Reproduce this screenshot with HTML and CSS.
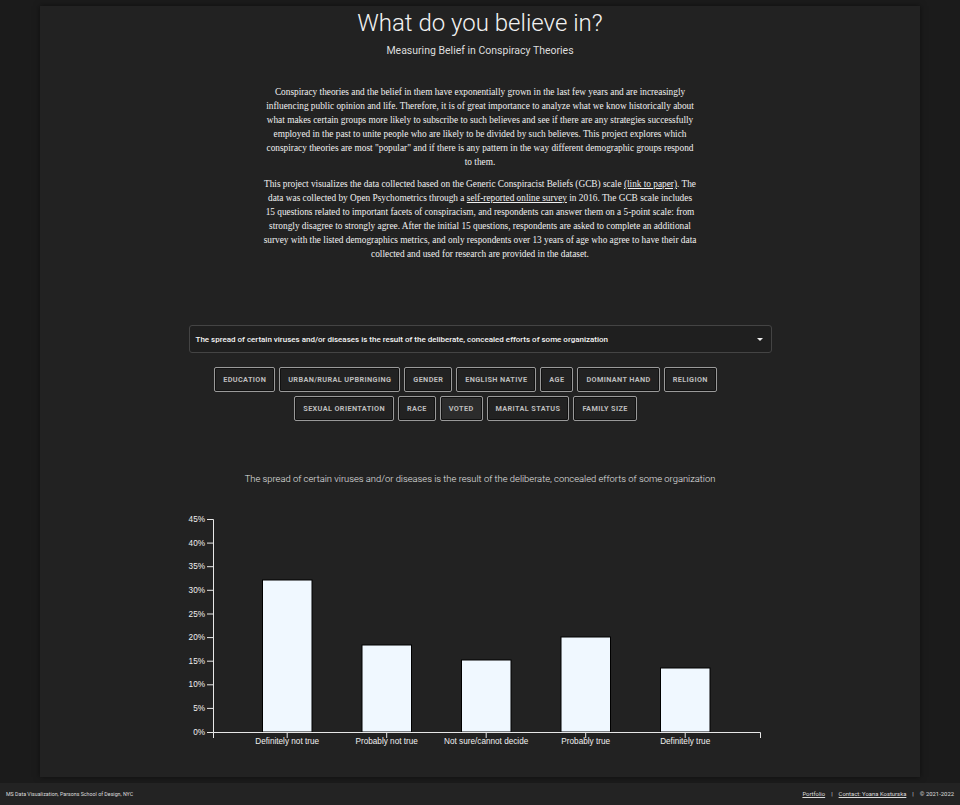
FILE: index.html
```html
<!DOCTYPE html>
<html lang="en">
<head>
<meta charset="utf-8">
<title>What do you believe in?</title>
<link rel="stylesheet" href="styles.css">
</head>
<body>
<main class="page">
  <header class="hero">
    <h1 class="title">What do you believe in?</h1>
    <p class="subtitle">Measuring Belief in Conspiracy Theories</p>
  </header>
  <section class="intro">
    <p>Conspiracy theories and the belief in them have exponentially grown in the last few years and are increasingly influencing public opinion and life. Therefore, it is of great importance to analyze what we know historically about what makes certain groups more likely to subscribe to such believes and see if there are any strategies successfully employed in the past to unite people who are likely to be divided by such believes. This project explores which conspiracy theories are most "popular" and if there is any pattern in the way different demographic groups respond to them.</p>
    <p>This project visualizes the data collected based on the Generic Conspiracist Beliefs (GCB) scale <a href="#">(link to paper)</a>. The data was collected by Open Psychometrics through a <a href="#">self-reported online survey</a> in 2016. The GCB scale includes 15&nbsp;questions related to important facets of conspiracism, and respondents can answer them on a 5-point scale: from strongly disagree to strongly agree. After the initial 15 questions, respondents are asked to complete an additional survey with the listed demographics metrics, and only respondents over 13 years of age who agree to have their data collected and used for research are provided in the dataset.</p>
  </section>
  <div class="select">
    <span class="select-text">The spread of certain viruses and/or diseases is the result of the deliberate, concealed efforts of some organization</span>
    <span class="caret"></span>
  </div>
  <div class="filters">
    <div class="row">
      <button class="btn">Education</button>
      <button class="btn">Urban/Rural Upbringing</button>
      <button class="btn">Gender</button>
      <button class="btn">English Native</button>
      <button class="btn">Age</button>
      <button class="btn">Dominant Hand</button>
      <button class="btn">Religion</button>
    </div>
    <div class="row">
      <button class="btn">Sexual Orientation</button>
      <button class="btn">Race</button>
      <button class="btn active">Voted</button>
      <button class="btn">Marital Status</button>
      <button class="btn">Family Size</button>
    </div>
  </div>
  <h2 class="chart-title">The spread of certain viruses and/or diseases is the result of the deliberate, concealed efforts of some organization</h2>
  <svg class="chart" width="600" height="250" viewBox="0 0 600 250">
    <g class="bars">
      <rect x="82.5" y="75" width="49.5" height="152"/>
      <rect x="182" y="140" width="49.5" height="87"/>
      <rect x="281.5" y="155" width="49.5" height="72"/>
      <rect x="381" y="132" width="49.5" height="95"/>
      <rect x="480.5" y="163" width="49.5" height="64"/>
    </g>
    <g class="axis">
      <path d="M27 14.5H33.5V227.5H27"/>
      <path d="M27 38.1H33M27 61.7H33M27 85.3H33M27 109H33M27 132.6H33M27 156.2H33M27 179.8H33M27 203.4H33"/>
      <path d="M33.5 233V227.5H580.5V233"/>
      <path d="M107.2 227.5V233M206.7 227.5V233M306.2 227.5V233M405.7 227.5V233M505.2 227.5V233"/>
    </g>
    <g class="ylabels">
      <text x="25" y="14.5">45%</text>
      <text x="25" y="38.1">40%</text>
      <text x="25" y="61.7">35%</text>
      <text x="25" y="85.3">30%</text>
      <text x="25" y="109">25%</text>
      <text x="25" y="132.6">20%</text>
      <text x="25" y="156.2">15%</text>
      <text x="25" y="179.8">10%</text>
      <text x="25" y="203.4">5%</text>
      <text x="25" y="227.5">0%</text>
    </g>
    <g class="xlabels">
      <text x="107.2" y="233.5">Definitely not true</text>
      <text x="206.7" y="233.5">Probably not true</text>
      <text x="306.2" y="233.5">Not sure/cannot decide</text>
      <text x="405.7" y="233.5">Probably true</text>
      <text x="505.2" y="233.5">Definitely true</text>
    </g>
  </svg>
</main>
<footer class="footer">
  <span class="footer-left">MS Data Visualization, Parsons School of Design, NYC</span>
  <span class="footer-right"><a href="#">Portfolio</a><span class="sep">|</span><a href="#">Contact: Yoana Kosturska</a><span class="sep">|</span>© 2021-2022</span>
</footer>
</body>
</html>
```
FILE: styles.css
```css
html, body {
  margin: 0;
  padding: 0;
}
body {
  background: #1b1b1b;
  color: #eee;
  font-family: Roboto, "Liberation Sans", sans-serif;
  width: 960px;
  height: 805px;
  overflow: hidden;
}
.page {
  width: 880px;
  height: 771px;
  margin: 6px auto 0;
  background: #222222;
  box-shadow: 0 0 6px rgba(0,0,0,0.5);
  display: flex;
  flex-direction: column;
  align-items: center;
  box-sizing: border-box;
  padding-top: 3px;
}
.hero {
  text-align: center;
}
.title {
  margin: 0;
  font-size: 24px;
  font-weight: 300;
  line-height: 28px;
  color: #f2f2f2;
}
.subtitle {
  margin: 7px 0 0;
  font-size: 10.5px;
  font-weight: 400;
  line-height: 14px;
  color: #ddd;
}
.intro {
  width: 435px;
  margin-top: 27px;
  text-align: center;
  font-family: "Liberation Serif", "Times New Roman", serif;
  font-size: 9.3px;
  line-height: 14px;
  color: #f0f0f0;
}
.intro p {
  margin: 0 0 8px;
}
.intro p:last-child {
  margin-bottom: 0;
}
.intro a {
  color: #f0f0f0;
}
.select {
  margin-top: 64px;
  width: 583px;
  height: 28px;
  box-sizing: border-box;
  border: 1px solid #444;
  border-radius: 3px;
  background: #1f1f1f;
  display: flex;
  align-items: center;
  justify-content: space-between;
  padding: 0 8px 0 6px;
}
.select-text {
  font-size: 8px;
  font-weight: 500;
  color: #f4f4f4;
}
.caret {
  width: 0;
  height: 0;
  border-left: 3px solid transparent;
  border-right: 3px solid transparent;
  border-top: 3px solid #eee;
}
.filters {
  margin-top: 14px;
  margin-right: 29px;
  display: flex;
  flex-direction: column;
  gap: 4px;
  align-items: center;
}
.row {
  display: flex;
  gap: 4px;
}
.btn {
  height: 25px;
  padding: 0 8px;
  background: #222;
  border: 1px solid #9a9a9a;
  border-radius: 2px;
  box-shadow: inset 0 0 0 1px #111;
  color: #bdbdbd;
  font-family: Roboto, "Liberation Sans", sans-serif;
  font-size: 7.3px;
  font-weight: 700;
  letter-spacing: 0.05em;
  text-transform: uppercase;
}
.btn.active {
  background: #2c2c2c;
}
.chart-title {
  margin: 51px 0 0;
  font-size: 9.4px;
  font-weight: 300;
  line-height: 14px;
  color: #e4e4e4;
}
.chart {
  margin-top: 19px;
  display: block;
}
.bars rect {
  fill: #f0f8ff;
  stroke: #000;
  stroke-width: 1;
}
.axis path {
  fill: none;
  stroke: #e8e8e8;
  stroke-width: 1;
}
.ylabels text {
  fill: #f0f0f0;
  font-family: "Liberation Sans", Arial, sans-serif;
  font-size: 8.2px;
  text-anchor: end;
  dominant-baseline: central;
}
.xlabels text {
  fill: #f0f0f0;
  font-family: "Liberation Sans", Arial, sans-serif;
  font-size: 8.2px;
  text-anchor: middle;
  dominant-baseline: hanging;
}
.footer {
  height: 22px;
  margin-top: 6px;
  background: #232323;
  display: flex;
  align-items: center;
  justify-content: space-between;
  padding: 0 6px;
  color: #ddd;
}
.footer-left {
  font-size: 5.3px;
}
.footer-right {
  font-size: 5.9px;
}
.footer a {
  color: #ddd;
}
.sep {
  margin: 0 6px;
}
```
